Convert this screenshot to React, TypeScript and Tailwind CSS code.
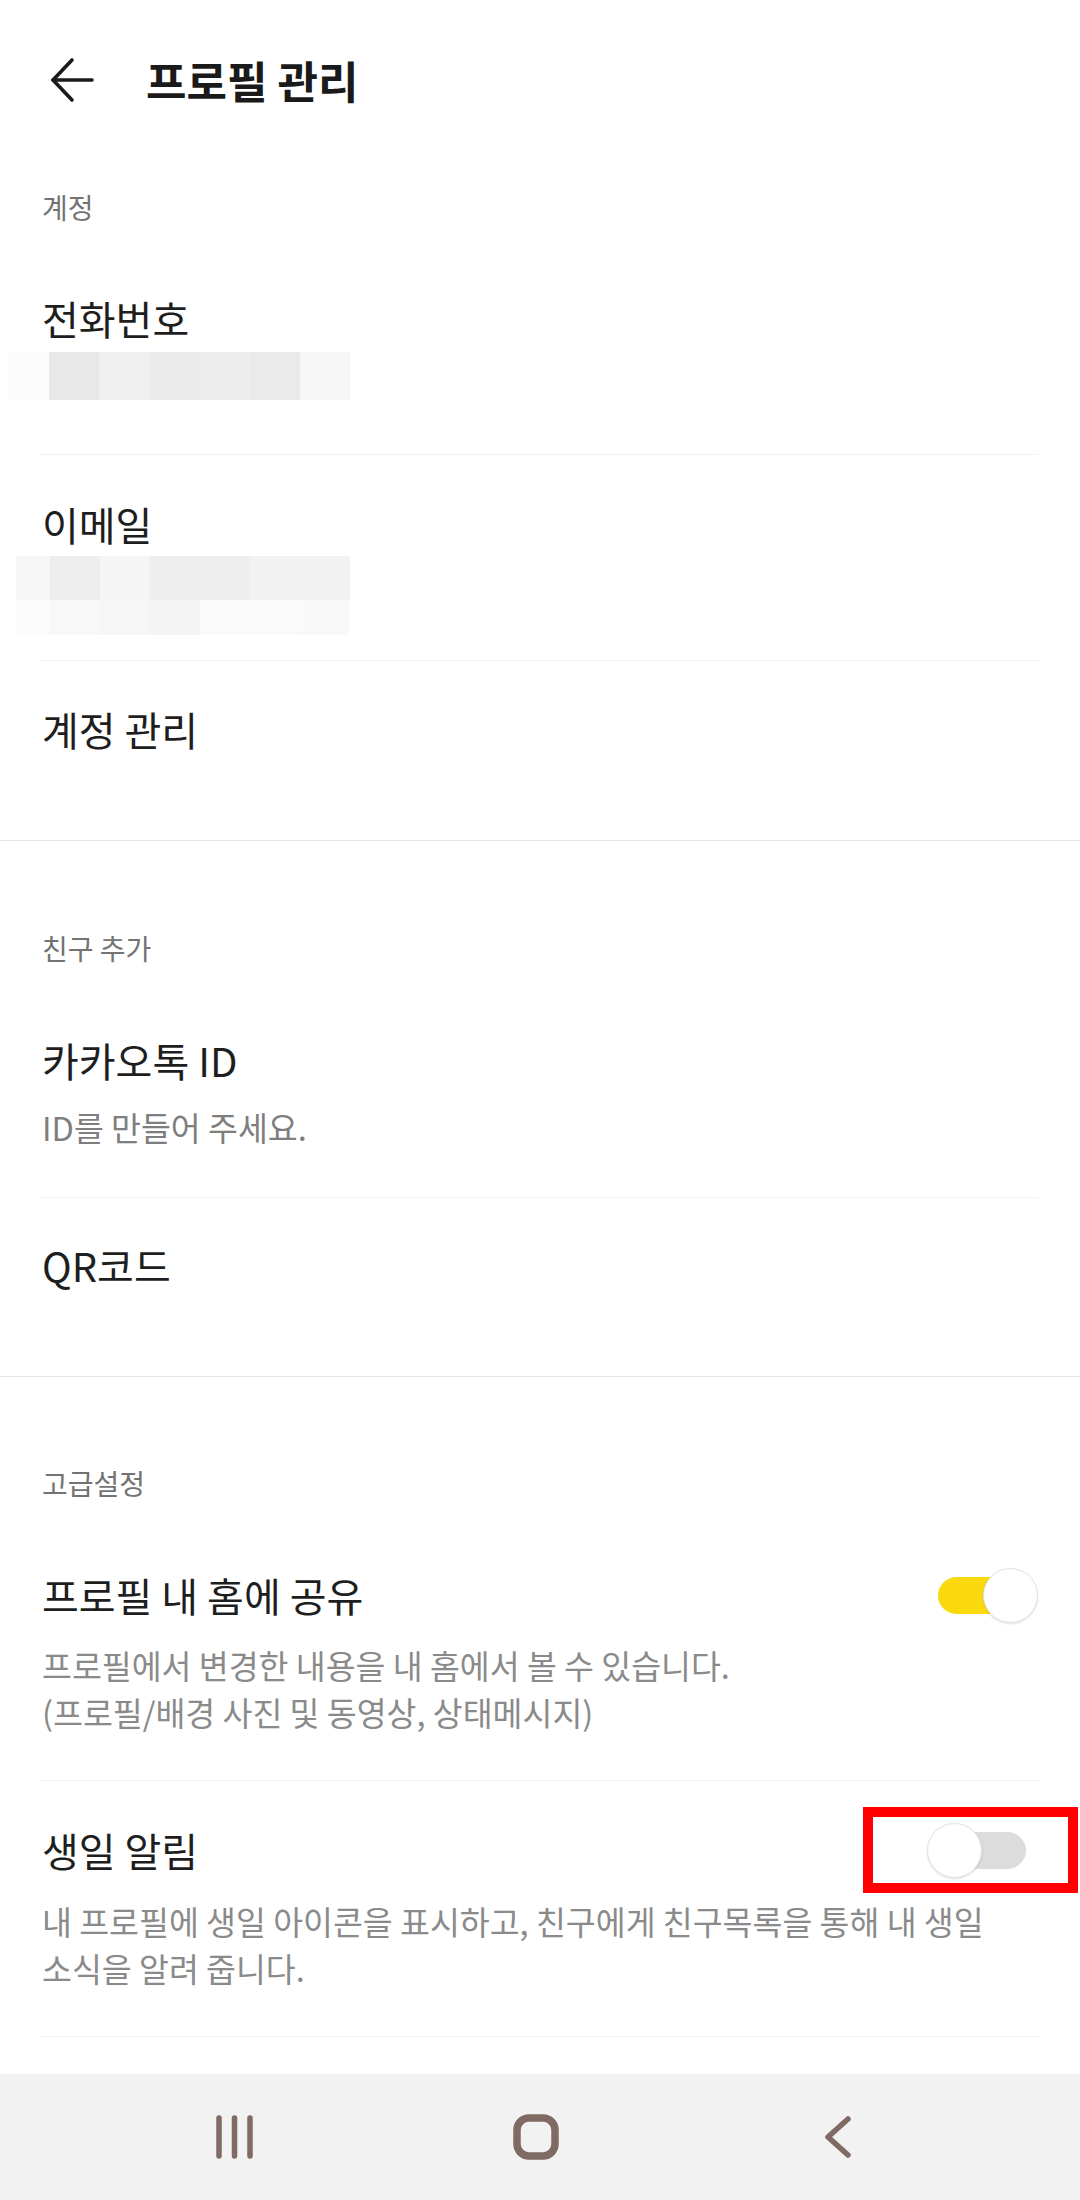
import React from "react";

const FONT = "font-['Noto_Sans_CJK_KR','Noto_Sans',sans-serif]";

// pixelated (blurred) personal info blocks
function Pixels({ rows }: { rows: { h: number; cells: [number, string][] }[] }) {
  return (
    <div className="flex flex-col">
      {rows.map((r, i) => (
        <div key={i} className="flex" style={{ height: r.h }}>
          {r.cells.map(([w, c], j) => (
            <div key={j} style={{ width: w, backgroundColor: c }} />
          ))}
        </div>
      ))}
    </div>
  );
}

function Divider({ full }: { full?: boolean }) {
  return full ? (
    <div className="h-px w-full bg-[#e6e6e6]" />
  ) : (
    <div className="h-px ml-[40px] mr-[42px] bg-[#f1f1f1]" />
  );
}

function Toggle({ on, marked }: { on: boolean; marked?: boolean }) {
  return (
    <div className="relative mr-[12px] w-[88px] h-[37px] shrink-0">
      <div
        className={
          "absolute inset-0 rounded-full " + (on ? "bg-[#fad90f]" : "bg-[#dcdcdc]")
        }
      />
      <div
        className={
          "absolute top-[-9px] w-[55px] h-[55px] rounded-full bg-white border border-[#e2e2e2] shadow-[0_1px_2px_rgba(0,0,0,0.12)] " +
          (on ? "left-[45px]" : "left-[-11px]")
        }
      />
      {marked && (
        <div className="absolute left-[-75px] top-[-25px] w-[215px] h-[86px] border-[10px] border-[#ff0000]" />
      )}
    </div>
  );
}

export default function App() {
  return (
    <div className={"w-full h-[2200px] bg-white flex flex-col " + FONT}>
      <div className="flex-1">
        {/* Header */}
        <div className="h-[160px] flex items-center">
          <svg
            className="ml-[50px] w-[44px] h-[46px]"
            viewBox="0 0 44 46"
            fill="none"
            stroke="#1a1a1a"
            strokeWidth="3.6"
            strokeLinecap="round"
            strokeLinejoin="round"
          >
            <path d="M3 23H42" />
            <path d="M22 3L3 23L22 43" />
          </svg>
          <h1 className="ml-[52px] text-[44px] leading-[48px] font-bold text-[#1a1a1a]">
            프로필 관리
          </h1>
        </div>

        {/* 계정 */}
        <div className="pt-[32px] px-[42px] text-[28px] leading-[30px] text-[#737373]">계정</div>

        <div className="pt-[74px] px-[42px] pb-[54px]">
          <div className="text-[40px] leading-[44px] text-[#1e1e1e]">전화번호</div>
          <div className="mt-[12px] -ml-[34px]">
            <Pixels
              rows={[
                {
                  h: 48,
                  cells: [
                    [41, "#fcfcfc"],
                    [50, "#e8e8e8"],
                    [51, "#f0f0f0"],
                    [50, "#ebebeb"],
                    [50, "#ededed"],
                    [50, "#eaeaea"],
                    [50, "#f7f7f7"],
                  ],
                },
              ]}
            />
          </div>
        </div>
        <Divider />

        <div className="pt-[47px] px-[42px] pb-[25px]">
          <div className="text-[40px] leading-[44px] text-[#1e1e1e]">이메일</div>
          <div className="mt-[10px] -ml-[26px]">
            <Pixels
              rows={[
                {
                  h: 44,
                  cells: [
                    [34, "#f7f7f7"],
                    [50, "#eeeeee"],
                    [50, "#f5f5f5"],
                    [100, "#eeeeee"],
                    [100, "#f2f2f2"],
                  ],
                },
                {
                  h: 35,
                  cells: [
                    [34, "#fcfcfc"],
                    [50, "#f8f8f8"],
                    [50, "#f6f6f6"],
                    [50, "#f4f4f4"],
                    [100, "#fafafa"],
                    [50, "#f9f9f9"],
                  ],
                },
              ]}
            />
          </div>
        </div>
        <Divider />

        <div className="pt-[46px] px-[42px] pb-[89px]">
          <div className="text-[40px] leading-[44px] text-[#1e1e1e]">계정 관리</div>
        </div>
        <Divider full />

        {/* 친구 추가 */}
        <div className="pt-[92px] px-[42px] text-[28px] leading-[30px] text-[#737373]">친구 추가</div>

        <div className="pt-[75px] px-[42px] pb-[52px]">
          <div className="text-[40px] leading-[44px] text-[#1e1e1e]">카카오톡 ID</div>
          <div className="mt-[27px] text-[32.5px] leading-[36px] text-[#7e7e7e]">ID를 만들어 주세요.</div>
        </div>
        <Divider />

        <div className="pt-[45px] px-[42px] pb-[89px]">
          <div className="text-[40px] leading-[44px] text-[#1e1e1e]">QR코드</div>
        </div>
        <Divider full />

        {/* 고급설정 */}
        <div className="pt-[91px] px-[42px] text-[28px] leading-[30px] text-[#737373]">고급설정</div>

        <div className="pt-[75px] px-[42px] pb-[45px]">
          <div className="h-[44px] flex items-center justify-between">
            <div className="text-[40px] leading-[44px] text-[#1e1e1e]">프로필 내 홈에 공유</div>
            <Toggle on />
          </div>
          <div className="mt-[24px] text-[32.5px] leading-[47px] text-[#8a8a8a] break-keep">
            프로필에서 변경한 내용을 내 홈에서 볼 수 있습니다.
            <br />
            (프로필/배경 사진 및 동영상, 상태메시지)
          </div>
        </div>
        <Divider />

        <div className="pt-[47px] px-[42px] pb-[45px]">
          <div className="h-[44px] flex items-center justify-between">
            <div className="text-[40px] leading-[44px] text-[#1e1e1e]">생일 알림</div>
            <Toggle on={false} marked />
          </div>
          <div className="mt-[25px] text-[32.5px] leading-[47px] text-[#8a8a8a] break-keep">
            내 프로필에 생일 아이콘을 표시하고, 친구에게 친구목록을 통해 내 생일 소식을 알려 줍니다.
          </div>
        </div>
        <Divider />
      </div>

      {/* Android nav bar */}
      <div className="h-[126px] bg-[#f2f2f2] flex items-center pl-[83px]">
        <div className="w-[302px] flex justify-center">
          <svg width="40" height="44" viewBox="0 0 40 44" stroke="#806b64" strokeWidth="5.5" strokeLinecap="round">
            <path d="M5 3V41M20.5 3V41M36 3V41" />
          </svg>
        </div>
        <div className="w-[302px] flex justify-center">
          <svg width="46" height="46" viewBox="0 0 46 46" fill="none" stroke="#806b64" strokeWidth="7.5">
            <rect x="4" y="4" width="38" height="38" rx="12" />
          </svg>
        </div>
        <div className="w-[302px] flex justify-center">
          <svg width="30" height="44" viewBox="0 0 30 44" fill="none" stroke="#806b64" strokeWidth="5.5" strokeLinecap="round" strokeLinejoin="round">
            <path d="M25 4L5 22L25 40" />
          </svg>
        </div>
      </div>
    </div>
  );
}
